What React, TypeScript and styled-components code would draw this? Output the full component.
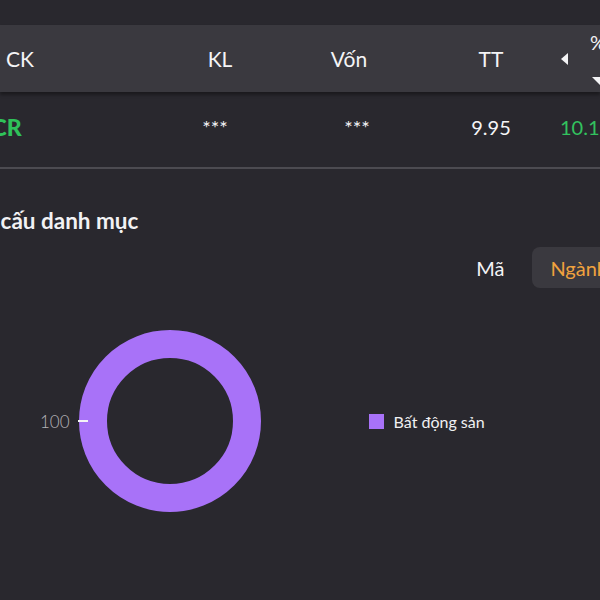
import React from "react";
import styled, { createGlobalStyle } from "styled-components";

const GlobalStyle = createGlobalStyle`
  html, body {
    margin: 0;
    padding: 0;
    background: #29282e;
    overflow: hidden;
  }
  body {
    font-family: Lato, "Noto Sans", sans-serif;
    color: #f2f2f4;
  }
`;

const PURPLE = "#a872f8";

function App() {
  return (
    <>
      <GlobalStyle />
      <Page>
        <TopBand />
        <HeaderRow>
          <HeadCell $align="left">CK</HeadCell>
          <HeadCell>KL</HeadCell>
          <HeadCell>Vốn</HeadCell>
          <HeadCell>TT</HeadCell>
          <ArrowCell>
            <LeftTriangle />
          </ArrowCell>
          <PctCell>
            <span>%</span>
            <DownTriangle />
          </PctCell>
        </HeaderRow>
        <DataRow>
          <Ticker>DCR</Ticker>
          <DataCell $shift={-5}>***</DataCell>
          <DataCell $shift={8}>***</DataCell>
          <DataCell>9.95</DataCell>
          <ChangeCell>10.19%</ChangeCell>
        </DataRow>
        <Divider />
        <SectionTitle>Cơ cấu danh mục</SectionTitle>
        <Segments>
          <SegButton>Mã</SegButton>
          <SegButton $active>Ngành</SegButton>
        </Segments>
        <ChartRow>
          <Axis>
            <AxisLabel>100</AxisLabel>
            <Tick />
          </Axis>
          <Donut width="184" height="184" viewBox="0 0 184 184">
            <circle cx="92" cy="92" r="77" fill="none" stroke={PURPLE} strokeWidth="28" />
          </Donut>
          <Legend>
            <Swatch />
            <LegendText>Bất động sản</LegendText>
          </Legend>
        </ChartRow>
      </Page>
    </>
  );
}

export default App;

const Page = styled.div`
  width: 600px;
  height: 600px;
  overflow: hidden;
  background: #29282e;
`;

const TopBand = styled.div`
  height: 25px;
`;

const HeaderRow = styled.div`
  height: 67px;
  display: grid;
  grid-template-columns: 170px 100px 158px 126px 20px 1fr;
  align-items: center;
  background: #3a393f;
  box-shadow: 0 3px 3px rgba(0, 0, 0, 0.35);
  position: relative;
  z-index: 1;
`;

const HeadCell = styled.div<{ $align?: string }>`
  font-size: 21px;
  text-align: ${(p) => p.$align || "center"};
  padding-left: ${(p) => (p.$align === "left" ? "6px" : "0")};
  color: #f4f4f6;
`;

const ArrowCell = styled.div`
  display: flex;
  justify-content: center;
  align-items: center;
  height: 100%;
`;

const LeftTriangle = styled.div`
  width: 0;
  height: 0;
  border-top: 6px solid transparent;
  border-bottom: 6px solid transparent;
  border-right: 7px solid #f4f4f6;
`;

const PctCell = styled.div`
  height: 100%;
  display: flex;
  flex-direction: column;
  justify-content: space-between;
  padding: 6px 0 7px 16px;
  box-sizing: border-box;
  font-size: 20px;
  line-height: 22px;
  white-space: nowrap;
`;

const DownTriangle = styled.div`
  width: 0;
  height: 0;
  margin-left: 2px;
  border-left: 8px solid transparent;
  border-right: 8px solid transparent;
  border-top: 8px solid #f4f4f6;
`;

const DataRow = styled.div`
  height: 75px;
  padding-bottom: 6px;
  box-sizing: border-box;
  display: grid;
  grid-template-columns: 170px 100px 158px 126px 1fr;
  align-items: center;
`;

const Ticker = styled.div`
  margin-left: -26px;
  font-size: 23px;
  font-weight: 900;
  color: #2fc25a;
`;

const DataCell = styled.div<{ $shift?: number }>`
  font-size: 20px;
  text-align: center;
  position: relative;
  left: ${(p) => p.$shift || 0}px;
  color: #f4f4f6;
`;

const ChangeCell = styled.div`
  font-size: 20px;
  padding-left: 6px;
  color: #32c25e;
  white-space: nowrap;
`;

const Divider = styled.div`
  height: 2px;
  background: #4c4b51;
`;

const SectionTitle = styled.h2`
  margin: 38px 0 0 -33px;
  font-size: 22.5px;
  font-weight: 700;
  line-height: 27px;
  white-space: nowrap;
`;

const Segments = styled.div`
  margin-top: 13px;
  display: flex;
  justify-content: flex-end;
  gap: 10px;
  margin-right: -26px;
`;

const SegButton = styled.div<{ $active?: boolean }>`
  height: 41px;
  display: flex;
  align-items: center;
  padding: 0 18px;
  border-radius: 8px;
  font-size: 20px;
  color: ${(p) => (p.$active ? "#f0a23e" : "#f4f4f6")};
  background: ${(p) => (p.$active ? "#3a393f" : "transparent")};
`;

const ChartRow = styled.div`
  margin-top: 41px;
  display: flex;
  align-items: center;
`;

const Axis = styled.div`
  display: flex;
  align-items: center;
  margin-left: 40px;
  position: relative;
  z-index: 1;
`;

const AxisLabel = styled.span`
  font-size: 17px;
  font-weight: 300;
  color: #b4b4b8;
`;

const Tick = styled.div`
  width: 10px;
  height: 2px;
  margin-left: 8px;
  background: #f4f4f6;
`;

const Donut = styled.svg`
  margin-left: -10px;
  display: block;
`;

const Legend = styled.div`
  margin-left: 107px;
  display: flex;
  align-items: center;
  gap: 10px;
`;

const Swatch = styled.div`
  width: 15px;
  height: 15px;
  background: ${PURPLE};
`;

const LegendText = styled.span`
  font-size: 16px;
  color: #f0f0f2;
`;
